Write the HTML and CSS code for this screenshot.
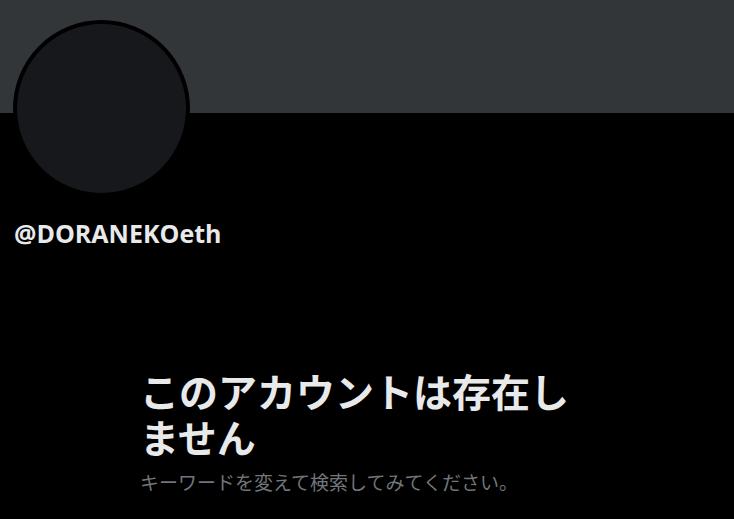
FILE: index.html
```html
<!DOCTYPE html>
<html lang="ja">
<head>
  <meta charset="UTF-8" />
  <meta name="viewport" content="width=device-width, initial-scale=1.0"/>
  <title>@DORANEKOeth</title>
  <link rel="stylesheet" href="styles.css">
</head>
<body>

  <!-- Header banner + avatar -->
  <div class="banner"></div>
  <div class="profile">
    <div class="avatar"></div>
    <div class="handle">@DORANEKOeth</div>
  </div>

  <!-- Empty state -->
  <div class="empty">
    <h1 class="empty-title">このアカウントは存在しません</h1>
    <p class="empty-text">キーワードを変えて検索してみてください。</p>
  </div>

</body>
</html>
```

FILE: styles.css
```css
body {
  margin: 0;
  padding: 0;
  background: #000;
  overflow: hidden;
  font-family: "Open Sans", "Noto Sans CJK JP", sans-serif;
  color: #e7e9ea;
}

.banner {
  height: 113px;
  background: #333639;
}

.profile {
  padding-left: 13px;
}

.avatar {
  width: 169px;
  height: 169px;
  margin-top: -93px;
  border: 4px solid #000;
  border-radius: 50%;
  background: #16181c;
}

.handle {
  margin-top: 21px;
  padding-left: 1px;
  font-size: 25px;
  font-weight: 700;
  line-height: 30px;
}

.empty {
  width: 450px;
  margin: 119px 0 0 140px;
}

.empty-title {
  margin: 0;
  font-family: "Noto Sans CJK JP", sans-serif;
  font-size: 39px;
  font-weight: 700;
  line-height: 46px;
}

.empty-text {
  margin: 10px 0 0;
  font-family: "Noto Sans CJK JP", sans-serif;
  font-size: 19px;
  font-weight: 400;
  line-height: 26px;
  color: #71767b;
}
```
